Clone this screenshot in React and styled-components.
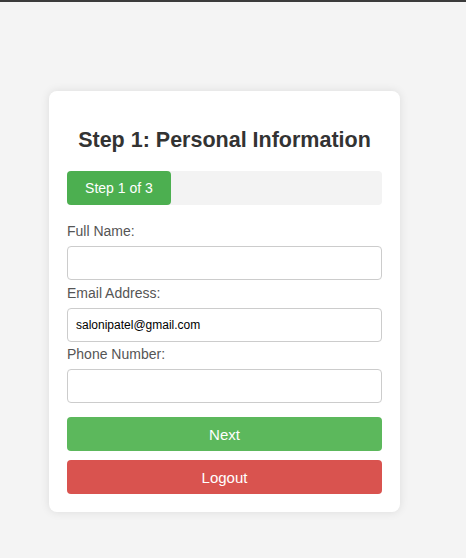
import React from "react";
import styled, { createGlobalStyle } from "styled-components";

const Global = createGlobalStyle`
  html, body { margin: 0; padding: 0; }
  body {
    background: #f4f4f4;
    font-family: "Liberation Sans", Arial, sans-serif;
  }
`;

const TopLine = styled.div`
  height: 2px;
  background: #3b3b3b;
`;

const Page = styled.div`
  display: flex;
  align-items: flex-start;
  padding: 89px 0 0 49px;
  min-height: 558px;
  box-sizing: border-box;
`;

const Card = styled.div`
  width: 351px;
  box-sizing: border-box;
  background: #fff;
  border-radius: 8px;
  box-shadow: 0 0 10px rgba(0, 0, 0, 0.1);
  padding: 18px;
  display: flex;
  flex-direction: column;
`;

const Title = styled.h2`
  margin: 18px 0 18px;
  font-size: 21.5px;
  line-height: 26px;
  font-weight: bold;
  color: #333;
  text-align: center;
`;

const Progress = styled.div`
  height: 34px;
  background: #f3f3f3;
  border-radius: 4px;
  display: flex;
  margin-bottom: 18px;
`;

const ProgressFill = styled.div`
  background: #4caf50;
  border-radius: 4px;
  color: #fff;
  font-size: 14px;
  display: flex;
  align-items: center;
  justify-content: center;
`;

const Field = styled.div`
  display: flex;
  flex-direction: column;
  margin-bottom: ${(p) => p.$mb ?? 5}px;
`;

const Label = styled.label`
  font-size: 14px;
  line-height: 16px;
  color: #555;
  margin-bottom: 7px;
`;

const Input = styled.input`
  height: 34px;
  box-sizing: border-box;
  border: 1px solid #ccc;
  border-radius: 4px;
  padding: 0 8px;
  font-family: "Liberation Sans", Arial, sans-serif;
  font-size: 12px;
  color: #000;
  background: #fff;
  outline: none;
`;

const Button = styled.button`
  height: 34px;
  border: none;
  border-radius: 4px;
  background: ${(p) => p.$bg};
  color: #fff;
  font-family: "Liberation Sans", Arial, sans-serif;
  font-size: 15px;
  cursor: pointer;
  margin-bottom: ${(p) => p.$mb ?? 0}px;
`;

export default function App() {
  return (
    <>
      <Global />
      <TopLine />
      <Page>
        <Card>
          <Title>Step 1: Personal Information</Title>
          <Progress>
            <ProgressFill style={{ width: "33%" }}>Step 1 of 3</ProgressFill>
          </Progress>
          <Field>
            <Label>Full Name:</Label>
            <Input type="text" />
          </Field>
          <Field $mb={4}>
            <Label>Email Address:</Label>
            <Input type="email" defaultValue="salonipatel@gmail.com" />
          </Field>
          <Field $mb={14}>
            <Label>Phone Number:</Label>
            <Input type="tel" />
          </Field>
          <Button $bg="#5cb85c" $mb={9}>Next</Button>
          <Button $bg="#d9534f">Logout</Button>
        </Card>
      </Page>
    </>
  );
}
